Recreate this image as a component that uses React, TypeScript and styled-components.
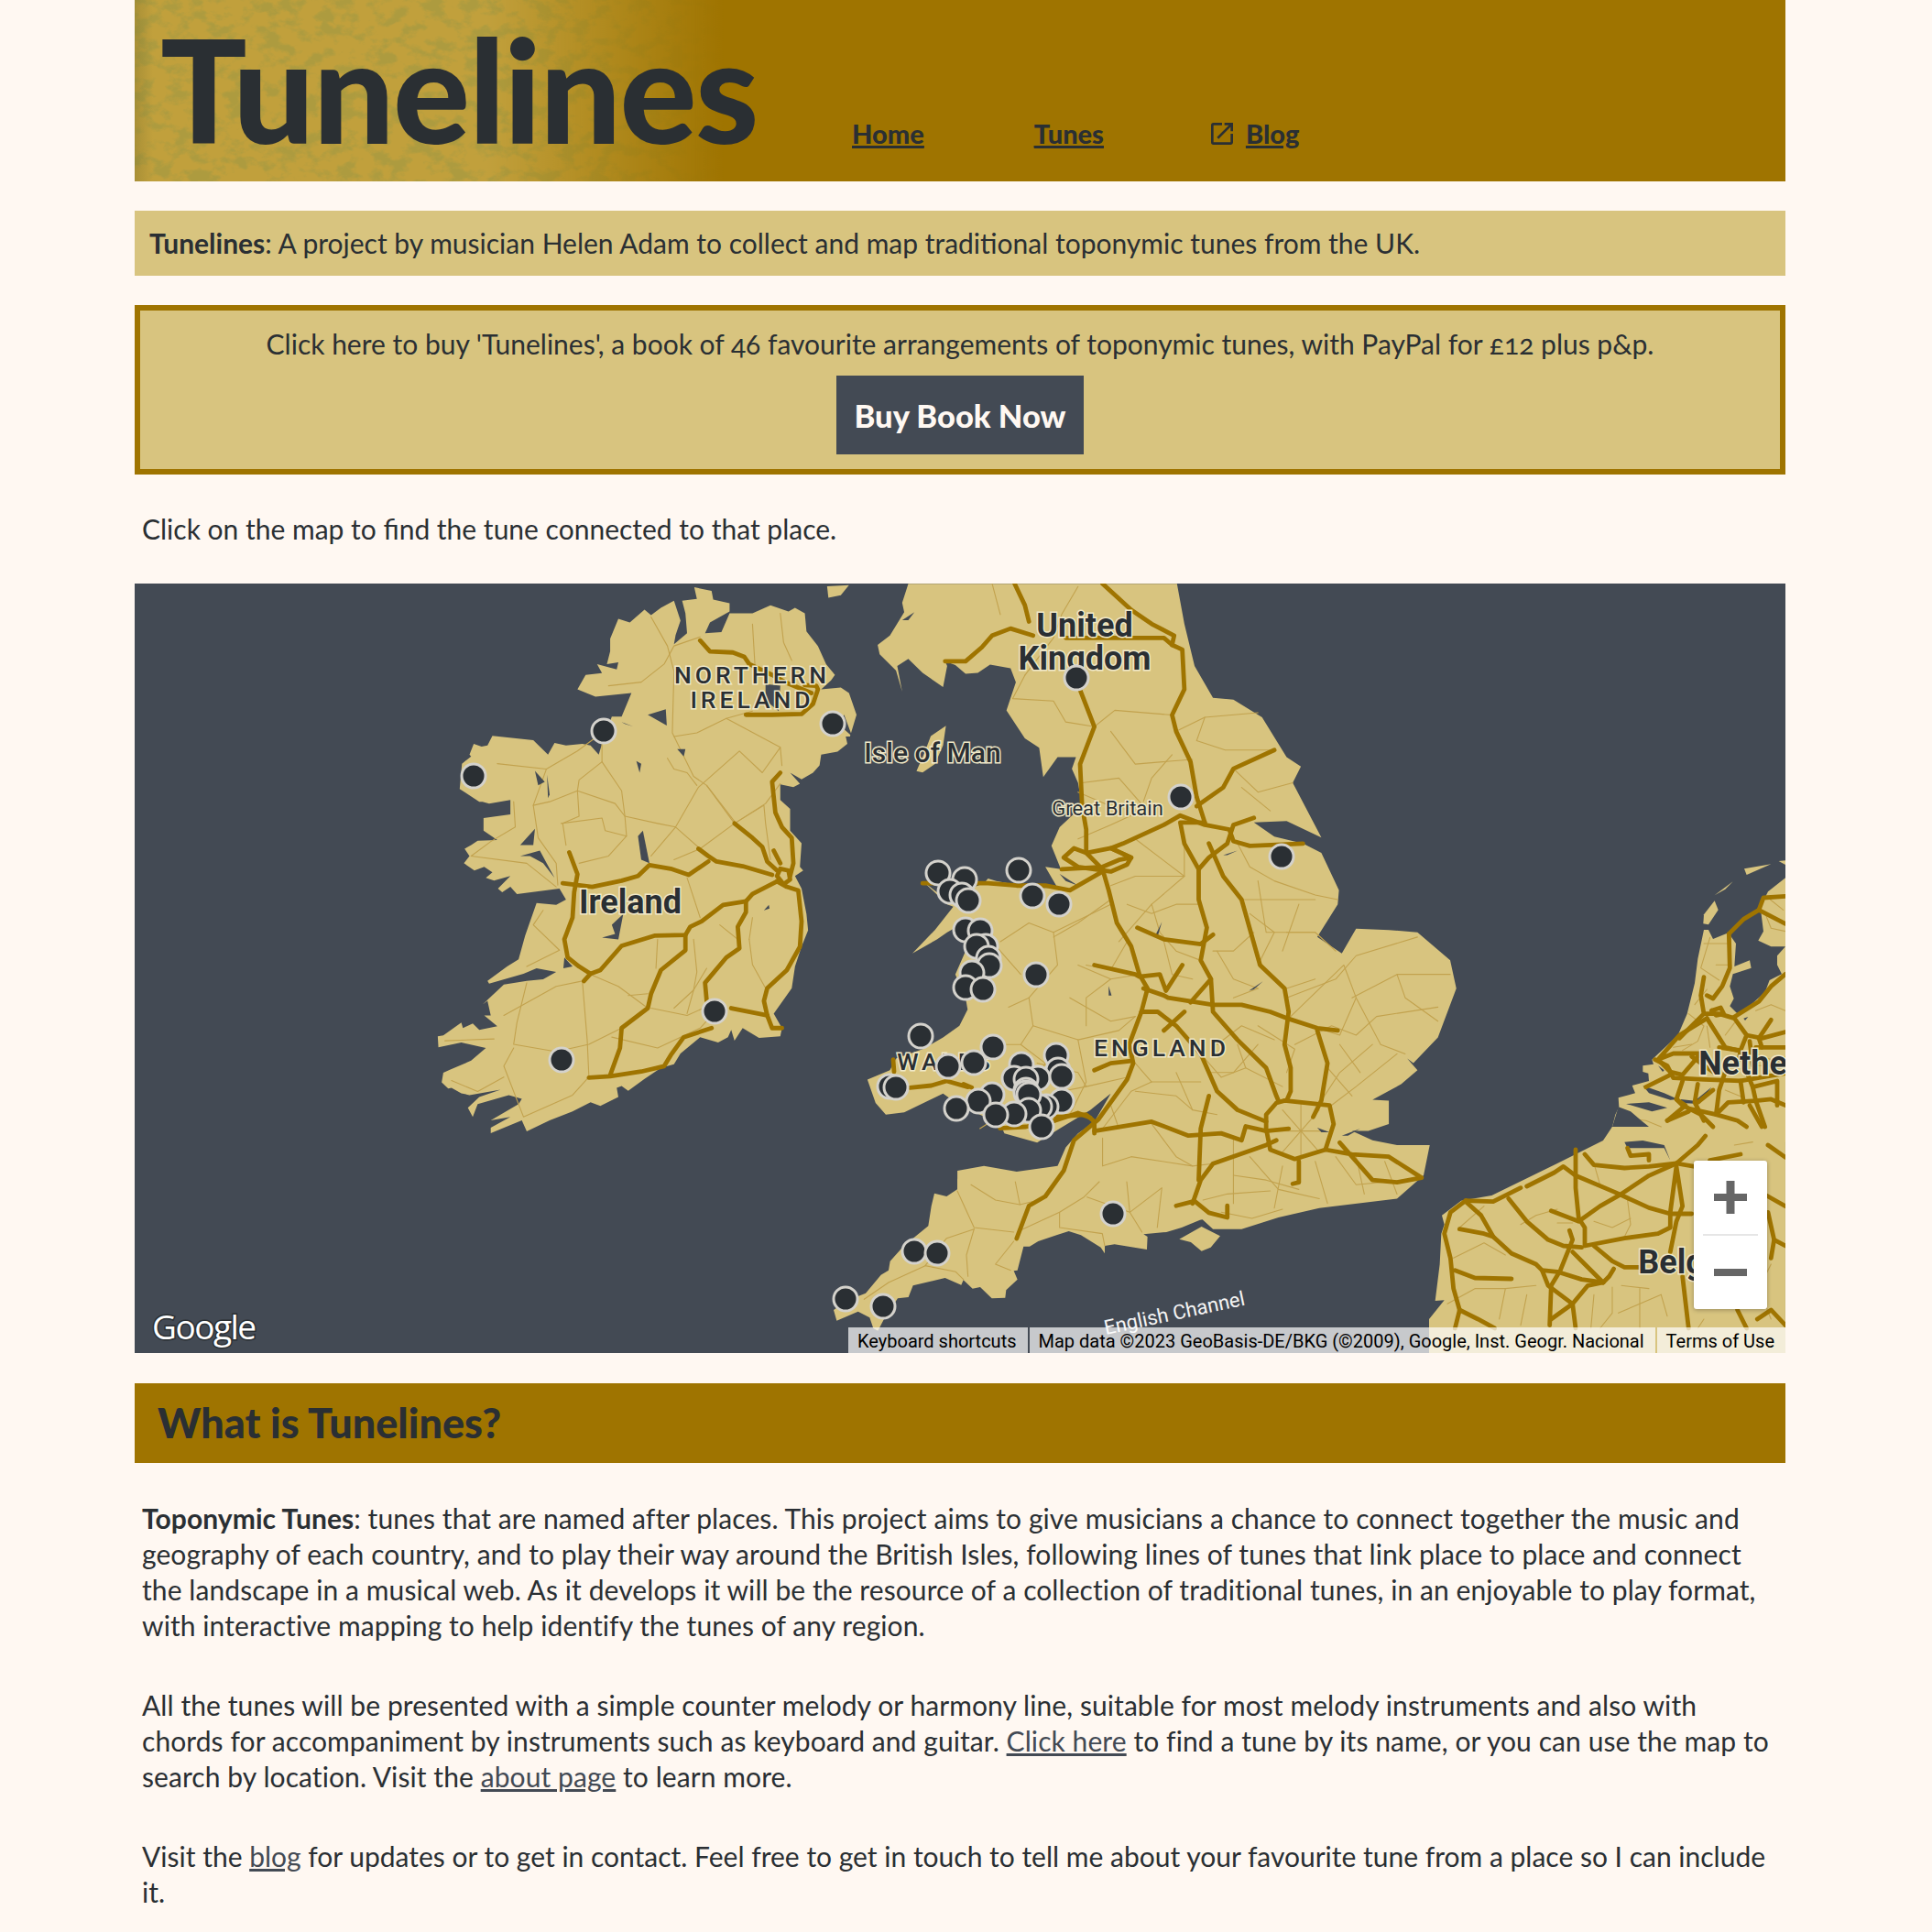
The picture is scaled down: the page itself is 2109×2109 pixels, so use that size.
import React from "react";
import styled, { createGlobalStyle } from "styled-components";
import { MdOpenInNew } from "react-icons/md";

const ink = "#2a2f33";
const slate = "#434a54";
const gold = "#9f7400";
const sand = "#d8c47f";

// map geometry, each region traced in its own crop coordinates
type Region = {
  transform: string;
  land?: string[];
  water?: string[];
  minor?: string[];
  major?: string[];
};

const regions: Region[] = [
  {
    // Ireland
    transform: "translate(450 630) scale(.35714 .3954)",
    land: [
      "862,28 915,38 920,62 970,72 970,95 910,125 895,155 945,152 970,100 1040,100 1095,78 1150,95 1170,85 1200,100 1205,150 1240,190 1265,240 1292,270 1280,285 1250,310 1310,305 1335,320 1358,380 1338,440 1325,440 1330,460 1300,482 1250,490 1245,520 1225,540 1190,558 1155,540 1185,570 1165,580 1125,572 1125,615 1155,640 1155,700 1190,735 1185,800 1195,810 1170,825 1190,860 1205,930 1210,975 1190,1020 1170,1075 1160,1135 1105,1205 1130,1245 1125,1268 1060,1272 1010,1245 985,1280 975,1250 965,1270 935,1285 880,1270 820,1315 800,1345 760,1355 710,1385 660,1418 640,1405 625,1410 630,1435 575,1460 545,1450 490,1475 420,1500 350,1530 335,1500 240,1535 240,1520 300,1490 240,1500 325,1455 335,1440 295,1430 200,1455 185,1490 170,1465 205,1435 270,1415 175,1430 150,1425 120,1410 110,1412 90,1395 95,1368 115,1360 180,1335 225,1300 150,1285 80,1298 78,1268 95,1265 150,1230 155,1245 185,1232 205,1250 260,1240 220,1210 240,1210 230,1170 215,1180 280,1125 350,1115 400,1110 440,1090 380,1080 340,1095 235,1122 230,1115 290,1075 325,1055 345,990 380,900 440,905 470,890 450,860 320,875 300,855 275,870 262,860 300,825 250,838 225,830 245,815 220,800 190,810 158,790 175,770 160,750 180,740 200,728 260,726 218,700 218,665 300,655 300,615 235,625 215,620 205,620 145,585 152,515 180,495 175,490 188,460 212,468 230,465 245,438 370,450 415,490 435,458 470,465 520,460 545,465 570,490 580,460 610,385 640,385 670,320 560,330 505,310 530,270 580,265 565,240 625,255 630,235 595,240 605,205 605,170 630,115 665,125 710,90 730,105 760,85 800,65 820,120 805,160 800,185 840,155 835,100 825,65 870,60",
      "1268,25 1335,22 1310,50 1272,57",
    ],
    water: [
      "1080,295 1125,300 1120,370 1080,340",
      "1310,395 1320,380 1345,440 1320,420",
      "375,535 405,565 385,575",
      "412,545 420,600 415,610",
      "690,715 705,700 725,790 700,780",
      "610,960 645,930 630,1000 580,995 620,985",
      "685,508 700,515 695,540",
      "810,475 835,475 830,495",
      "1075,920 1090,905 1092,915",
      "720,380 775,365 778,410",
      "640,400 675,412 650,405",
      "330,770 390,755 435,830 400,790 360,770",
      "330,740 375,695 370,740",
      "465,1050 490,1075 462,1080",
    ],
    minor: [
      "880,165 800,190 770,240 700,290 600,300",
      "730,110 780,190 800,260 795,430 860,550 900,575 990,680",
      "1040,130 1050,280",
      "1125,100 1135,180 1160,230",
      "580,460 580,510 640,590 650,660 655,715 600,770 510,790",
      "410,530 370,630 420,620 505,590 620,625 650,660 750,680 805,690 875,580 1000,480 1070,540 1125,470 1130,520",
      "260,515 410,530 505,480 580,430",
      "580,510 510,560 505,590 510,660 460,680 470,740",
      "310,620 315,690 240,730 180,770 350,790 440,855",
      "370,630 385,720 440,790 445,850",
      "455,680 580,665 590,700 655,715",
      "805,690 730,770",
      "805,690 880,750 985,680 1080,625 1125,570",
      "900,575 985,680 1075,630 1080,680 1095,780",
      "880,750 800,780",
      "960,390 1125,470",
      "800,440 870,430 960,390 1040,370",
      "780,500 800,530 840,540 870,575",
      "840,830 880,940",
      "750,1000 745,1080",
      "860,1000 870,1090 860,1140 800,1190",
      "940,960 995,1000",
      "1030,1000 1040,1070 1080,1135",
      "1040,940 1030,1000",
      "540,1095 630,1130 720,1190",
      "520,1115 535,1280 540,1380",
      "350,1120 320,1230 310,1290 440,1310 540,1290 640,1245",
      "280,1210 440,1130 520,1115",
      "310,1300 280,1350 340,1490 490,1430 540,1380",
      "610,1270 750,1300 880,1245 925,1200",
      "730,1190 840,1210 890,1190",
      "660,1155 720,1150",
      "900,1080 860,1140 840,1205",
      "400,920 370,960 450,1030 350,1075",
      "100,1280 250,1275",
      "120,1390 200,1420 280,1380",
    ],
    major: [
      "1125,540 1100,565 1110,650 1130,690 1160,720 1165,790 1155,825",
      "880,175 910,205 980,208 1015,220 1030,240 1100,270 1140,290 1220,320",
      "1020,380 1100,380 1190,378 1225,350 1240,310 1235,300 1200,298",
      "985,680 1040,720 1070,745 1085,785 1115,810",
      "1100,822 1010,798 930,785 905,770 875,750",
      "905,785 845,822 790,805 725,795 690,825 640,838 550,855 460,845",
      "480,760 505,820 495,870 490,940 465,1000 475,1050 510,1075 545,1095 525,1115",
      "1115,840 1040,875 1020,895 950,905 885,950 850,965 835,988 740,990 640,1018 575,1085 545,1095",
      "835,988 835,1030 760,1085 730,1150 720,1190 640,1245 635,1300 605,1375",
      "1020,895 1020,925 995,965 1000,1025 960,1050 895,1120 900,1170",
      "1115,840 1145,855 1180,865 1190,950 1185,1020 1145,1085 1085,1135 1075,1170 1085,1210 1100,1245 1130,1245",
      "975,1190 1085,1210",
      "915,1245 830,1270 790,1320 770,1350 700,1365 605,1378 540,1382",
      "1115,825 1125,805 1150,810 1155,835 1135,848 1115,825",
      "1105,755 1125,790",
    ],
  },
  {
    // Great Britain
    transform: "translate(900 630) scale(.44643 .5102)",
    land: [
      "205,14 190,55 195,75 160,125 130,145 135,165 175,200 190,245 178,190 205,175 240,205 290,235 300,190 295,180 320,188 345,207 375,205 405,187 455,195 468,225 445,285 490,345 525,365 535,428 570,385 615,385 605,410 620,440 630,490 575,535 555,575 578,625 540,620 570,665 520,665 480,660 420,650 400,645 390,655 345,670 305,695 240,650 300,700 315,705 270,755 215,805 275,775 300,760 340,740 345,800 320,850 345,900 350,925 330,960 290,985 240,1010 175,1030 160,1055 105,1075 125,1125 150,1150 195,1145 290,1105 330,1130 430,1170 440,1190 520,1210 575,1180 650,1140 700,1105 660,1165 620,1190 590,1220 570,1260 470,1272 390,1260 325,1270 325,1300 500,1400 900,1355 950,1395 1020,1395 1110,1370 1210,1350 1400,1330 1465,1280 1480,1215 1400,1215 1340,1205 1290,1185 1330,1185 1380,1170 1380,1120 1340,1118 1410,1085 1450,1055 1425,1030 1440,1040 1500,985 1545,880 1530,820 1450,760 1380,755 1300,752 1265,805 1205,770 1255,700 1258,670 1215,590 1170,570 1100,555 1050,525 1130,522 1215,557 1145,440 1165,405 1130,385 1070,300 1000,262 950,258 905,190 880,100 862,14",
      "225,415 245,375 260,340 297,318 290,360 270,400 240,418",
    ],
    water: [
      "190,92 220,75 205,92",
      "810,765 825,738 815,768",
      "1038,885 1072,865 1050,882",
      "695,875 702,895 695,895",
      "975,595 1010,585 985,595",
      "1205,1178 1235,1188 1215,1188",
      "1265,1195 1310,1180 1280,1195",
      "575,635 620,660 590,650",
    ],
    minor: [
      "410,14 430,80",
      "620,20 580,80 560,130 490,210",
      "490,210 460,260 560,265 590,310 660,320",
      "660,320 710,285 850,295",
      "860,330 930,300 1060,290",
      "930,300 910,350 980,370 1100,370",
      "1000,410 1060,460 1145,440",
      "700,330 760,400 900,390",
      "630,440 720,430 790,500",
      "1010,570 1040,620 1100,650 1200,680 1255,690",
      "1060,650 1080,760 1200,760 1250,800",
      "1020,690 1200,690",
      "700,700 560,760 570,830 500,900 510,960 620,990 640,1080 600,1150",
      "430,780 500,740 560,760",
      "560,770 620,740 700,690",
      "620,830 700,860 770,850",
      "640,960 640,900 700,860",
      "620,990 720,970 760,940",
      "480,1000 510,960",
      "380,1180 470,1130 580,1100 640,1090 740,1070",
      "1130,900 1250,860 1300,810 1450,770",
      "1140,940 1270,830 1300,900 1260,980 1205,965",
      "1290,900 1400,850 1530,850",
      "1400,850 1420,900 1500,950",
      "1300,900 1360,1000 1420,1020",
      "1240,1130 1300,1090 1400,1020",
      "1290,1110 1230,1050",
      "900,1000 970,1070 1030,1050 1120,1090",
      "760,1040 800,1080 920,1080",
      "680,1180 750,1100 800,1080",
      "680,1200 680,1260 750,1240 900,1260",
      "1000,1200 1000,1340",
      "1200,1250 1230,1340",
      "1250,1240 1300,1300 1420,1290",
      "1040,1240 1110,1310 1210,1330",
      "1105,1185 1225,1185",
      "1165,1125 1165,1245",
      "1120,1140 1210,1230",
      "1210,1140 1120,1230",
      "720,780 800,700 880,640 880,570",
      "1050,760 1000,800 950,800",
      "1060,960 1150,1010 1130,1060",
      "1010,1000 1030,1050",
      "1340,1000 1260,1060 1215,1120",
      "480,850 420,790",
      "700,660 760,640 850,640 880,640",
      "740,700 800,720 860,700 920,700",
      "740,780 700,840 640,830",
      "800,700 820,760 860,800 920,820",
      "830,780 850,850 900,860",
      "960,800 1000,860 1060,880",
      "1060,880 1000,900",
      "1040,720 1100,760 1060,830",
      "1130,880 1200,860",
      "1130,760 1200,760",
      "1160,700 1120,800",
      "1150,1000 1240,960 1300,980 1350,940 1500,920",
      "1260,1000 1310,1060",
      "1060,1000 1000,1060 940,1060",
      "960,1000 1020,960 1100,990",
      "860,1060 900,1140 960,1150",
      "760,1100 860,1110 900,1140",
      "700,1130 720,1180",
      "800,1170 860,1240 900,1260 950,1255",
      "1120,1260 1100,1350",
      "1000,1280 1080,1290 1160,1310",
      "1300,1240 1320,1320",
      "1370,1250 1400,1320",
      "600,900 700,950 760,940",
      "520,1040 620,1060 640,1090",
      "450,920 500,900",
      "420,1000 480,1000 540,1040 500,1100",
      "350,1050 420,1000",
      "620,560 700,530 800,490",
      "620,460 700,490",
      "850,380 800,430 780,480",
      "1020,450 1090,500",
      "760,560 820,600 880,640",
    ],
    major: [
      "465,14 490,60 500,95",
      "620,230 660,320 625,400 630,490 640,540 640,590 680,625 695,670 715,740 750,790 770,850 790,880 775,930",
      "295,180 345,180 385,150 410,125 455,110 510,125",
      "590,130 830,130 850,145",
      "680,14 750,70 800,100 855,125 850,145 875,155 880,240 850,295 860,330 895,395 910,470 930,525",
      "930,525 870,525 880,570 915,625 915,690 935,750 920,820 945,860 950,930 1010,990 1080,1050 1105,1110 1110,1120",
      "1130,1120 1140,1100 1140,1050 1125,1000 1135,930 1125,880 1065,830 1020,690 975,640 940,570",
      "1050,515 1000,530 985,570 940,600 915,625",
      "580,625 680,620 720,605 750,600 700,580 730,570 830,530 870,510 930,530 990,540 1000,565 1040,575 1170,570",
      "1100,370 1000,410 975,450 910,490",
      "585,600 610,580 640,590 700,580 750,600 740,615 700,630 620,620 585,600",
      "240,655 400,655 470,660 540,660 600,670 680,630",
      "660,830 760,850 770,855 820,850 835,885 875,830",
      "780,880 830,895 840,900 950,915 1020,915 1090,930 1135,945 1205,965 1255,970",
      "765,750 830,775 920,785 950,765",
      "895,910 945,860",
      "775,930 745,1000 755,1040 740,1075 670,1160 610,1205 585,1270 540,1325 500,1345 470,1415",
      "775,930 815,930 860,960 920,1020 960,1100 1010,1140 1080,1165",
      "660,1055 700,1040 750,1035",
      "1205,970 1230,1040 1215,1120 1195,1155",
      "1105,1125 1125,1120 1235,1130 1245,1170 1225,1225 1150,1245 1090,1225 1080,1180 1080,1150 1105,1125",
      "660,1185 800,1165 890,1195 970,1190 1020,1205 1030,1175 1080,1185 1135,1180",
      "1225,1225 1290,1235 1380,1240 1460,1285 1400,1295 1340,1290 1260,1210",
      "900,1340 920,1290 950,1255 1080,1215 1105,1205",
      "860,1345 905,1335 940,1360 985,1370 985,1345",
      "1160,1250 1160,1295 1145,1298",
      "565,1155 640,1150 660,1165 660,1190",
      "340,1085 360,1092",
      "940,1110 920,1180 915,1290",
      "830,970 880,930",
    ],
  },
  {
    // South West and the south coast
    transform: "translate(900 1290) scale(.3333)",
    land: [
      "360,38 400,48 435,25 435,-10 1300,-10 1300,110 1230,125 1170,150 1120,165 1045,172 1058,180 1056,222 950,205 918,210 918,235 905,215 840,175 800,162 760,175 700,195 672,212 652,212 632,290 620,292 632,320 595,355 592,380 548,382 510,345 485,350 455,322 448,338 395,315 290,340 275,378 240,382 200,440 175,488 160,480 148,445 110,425 40,455 30,420 60,400 110,375 135,365 185,305 210,290 215,260 260,210 340,145 350,80",
      "1162,188 1235,147 1296,178 1265,215 1235,227 1200,198",
    ],
    minor: [
      "435,30 490,150 620,165",
      "480,10 560,60 640,75",
      "625,0 640,75 680,65",
      "490,155 400,185 330,275 210,330 130,385",
      "330,275 430,295 455,320",
      "490,155 465,240 470,310",
      "620,195 560,270 610,290",
      "640,160 770,100 850,50 900,0",
      "770,100 770,150 910,170 918,210",
      "860,50 1000,100 1040,165",
      "1000,100 1105,20 1090,150",
      "990,0 1000,100",
      "1240,60 1320,40 1460,30",
      "1300,100 1400,120 1500,90",
    ],
  },
  {
    // South Wales trunk road
    transform: "translate(900 1100) scale(.3333)",
    major: [
      "225,170 228,210",
      "280,262 350,255 400,240 470,260",
      "575,395 660,390 755,370 830,345 870,360",
    ],
  },
  {
    // Netherlands
    transform: "translate(1760 930) scale(.3333)",
    land: [
      "100,700 135,695 130,680 215,600 245,530 270,430 280,350 300,255 315,255 330,285 380,265 405,300 400,375 450,355 455,380 395,400 385,440 398,480 385,505 415,535 500,460 515,420 555,400 540,370 540,340 567,310 520,310 478,290 495,260 485,180 510,130 567,85 580,85 580,950 -20,950 0,900 10,860 22,835 20,805 75,790 65,765 120,750 118,725 100,720",
      "432,55 520,40 440,75",
      "335,142 395,97 370,122",
      "300,205 335,160 347,190 315,238 298,235",
      "545,30 567,28 567,42",
    ],
    water: [
      "100,765 170,790 215,810 190,812 120,790",
      "45,825 120,820 180,838 130,850",
      "20,835 60,850 95,880 120,900 0,900",
      "225,810 270,815 325,770 285,825 225,822",
      "430,545 445,540 435,552",
      "150,700 170,715 165,720",
    ],
    minor: [
      "300,300 340,300 380,300",
      "320,280 290,380 350,420",
      "340,370 390,370",
      "270,500 310,450",
      "250,530 300,570 280,620 230,650",
      "310,570 320,640",
      "400,560 370,600",
      "500,200 520,250 567,260",
      "510,150 560,190",
      "470,520 520,500 567,520",
      "430,650 520,680 567,670",
      "370,780 420,800",
      "200,640 260,630",
      "470,700 560,700",
      "30,870 110,880 160,900",
    ],
    major: [
      "382,268 430,220 480,190 495,150 567,145",
      "480,190 567,235",
      "382,268 385,380 360,440 330,480 310,470",
      "300,410 290,470 300,530 220,610",
      "300,530 350,530 400,545 440,600 420,650 415,680",
      "400,540 480,490 520,440 567,400",
      "310,545 370,640 410,650",
      "440,600 490,610 567,590",
      "310,545 220,600 150,680 190,720 230,730 290,660 200,660 150,680",
      "140,680 180,700 200,740 300,745 420,750 567,725",
      "110,770 190,730",
      "370,720 350,780 340,860 380,820 470,815 520,810 567,830",
      "230,750 210,810 240,830 180,880",
      "210,810 230,830 290,860 330,900",
      "280,760 270,820 300,880",
      "460,770 470,815 500,900",
      "440,720 460,770 540,750 540,830",
      "520,550 480,610 490,640",
      "250,840 340,860 410,880 440,900",
      "450,830 490,900",
      "325,520 355,510 365,530 340,535 325,520",
      "180,880 250,850",
      "470,640 567,640",
      "350,640 420,650",
      "260,670 330,720",
      "420,750 430,820",
      "520,700 567,680",
      "330,780 280,820",
      "450,620 460,700",
    ],
  },
  {
    // Belgium and northern France
    transform: "translate(1560 1240) scale(.3333)",
    land: [
      "0,600 50,538 20,540 35,420 40,320 50,290 42,260 105,212 205,195 400,100 570,15 600,-30 1167,-30 1167,720 0,720",
    ],
    water: ["640,20 700,15 770,30 790,80 770,40 700,40 650,40"],
    minor: [
      "100,300 180,230",
      "80,400 180,350 250,390",
      "60,550 150,500 250,500 350,490",
      "300,290 350,260 420,240",
      "540,280 600,300 660,270",
      "540,90 560,160",
      "650,210 660,290 640,330",
      "600,495 600,580 560,630",
      "620,580 760,520",
      "690,500 690,630",
      "760,520 780,590",
      "880,320 860,440",
      "1120,420 1080,500 1120,600",
      "1000,30 1060,20",
      "250,500 230,600",
      "320,520 300,620",
      "540,520 530,630",
      "900,600 880,630",
      "420,285 470,285",
      "630,490 720,500",
    ],
    major: [
      "120,212 70,250 50,320 70,400 80,500 100,570 85,630",
      "100,570 160,600 215,630",
      "120,212 210,215 300,170",
      "320,165 410,120 440,100 480,130 610,185 720,235 790,255 860,255",
      "120,215 170,260 210,330 270,385 350,420 370,440 420,445 500,470 570,480 590,460 605,435",
      "260,205 320,280 390,340 440,360 500,365",
      "480,45 480,170 490,270 510,300 510,360 640,335 750,320 790,300 790,250 810,100 830,230 810,280 790,380",
      "400,245 490,280 560,230 630,190 720,130 810,90 870,100",
      "460,310 470,340 430,440 400,490 395,620",
      "370,440 390,490 470,550 520,490 570,480",
      "400,600 470,550 480,630",
      "470,380 510,420 570,480",
      "540,360 600,410 640,430 700,430",
      "100,305 180,320 210,330",
      "85,440 150,465 270,468",
      "510,60 540,95 640,105 720,100 810,90",
      "810,90 880,30 905,0",
      "1105,195 1167,230",
      "1110,250 1130,340 1167,360",
      "1130,340 1120,400",
      "1010,570 1040,630",
      "830,460 850,630",
      "1075,600 1120,570 1167,620",
      "1110,30 1167,70",
      "1020,60 920,80",
      "650,40 660,65 720,60 720,80",
    ],
  },
];

const markers = [
  [659, 798], [517, 847], [909, 790], [780, 1104], [613, 1157], [1175, 740], [1289, 870], [1399, 935],
  [1112, 950], [1024, 953], [1053, 960], [1037, 973], [1050, 977], [1057, 983], [1127, 978], [1156, 987],
  [1054, 1015], [1070, 1016], [1076, 1033], [1066, 1033], [1079, 1046], [1080, 1054], [1061, 1062], [1054, 1078],
  [1073, 1080], [1131, 1064], [1005, 1131], [971, 1186], [978, 1187], [1083, 1195], [1153, 1152], [1115, 1162],
  [1155, 1168], [1107, 1177], [1133, 1177], [1159, 1175], [1120, 1178], [1084, 1143], [1063, 1160], [1035, 1164],
  [1159, 1202], [1142, 1208], [1135, 1208], [1120, 1190], [1120, 1193], [1123, 1195], [1123, 1212], [1107, 1216],
  [1068, 1202], [1044, 1210], [1087, 1217], [1137, 1230], [1215, 1325], [998, 1366], [1023, 1368], [923, 1418], [964, 1426],
];

const GlobalStyle = createGlobalStyle`
  html, body {
    margin: 0;
    background: #fff8f2;
    color: ${ink};
    font-family: Lato, "Open Sans", sans-serif;
    font-size: 30px;
    line-height: 39px;
    font-variant-numeric: oldstyle-nums;
  }
`;

const Page = styled.div`
  width: 1802px;
  margin-left: 147px;
`;

const Header = styled.header`
  position: relative;
  display: flex;
  align-items: baseline;
  height: 198px;
  padding-left: 28px;
  background: ${gold};
  overflow: hidden;
`;

const HeaderTexture = styled.svg`
  position: absolute;
  left: 0;
  top: 0;
`;

const Title = styled.h1`
  position: relative;
  margin: 0;
  font-size: 157px;
  line-height: 192px;
  font-weight: 900;
  letter-spacing: -1.6px;
`;

const Nav = styled.nav`
  position: relative;
  display: flex;
  align-items: baseline;
  gap: 120px;
  margin-left: 103px;
`;

const NavLink = styled.a`
  display: inline-flex;
  align-items: baseline;
  gap: 14px;
  font-size: 29px;
  font-weight: 900;
  color: ${ink};
  span {
    text-decoration: underline;
    text-decoration-thickness: 3px;
  }
  svg {
    align-self: center;
    margin-left: -7px;
    margin-right: -4px;
  }
`;

const Intro = styled.p`
  margin: 32px 0;
  padding: 16px;
  background: ${sand};
`;

const BuyBox = styled.section`
  display: flex;
  flex-direction: column;
  align-items: center;
  gap: 15px;
  padding: 17px 0 16px;
  border: 6px solid ${gold};
  background: ${sand};
`;

const BuyText = styled.div`
  text-align: center;
`;

const BuyButton = styled.button`
  width: 270px;
  height: 86px;
  padding: 0;
  border: 0;
  background: ${slate};
  color: #fff8f2;
  font-family: inherit;
  font-size: 34.5px;
  font-weight: 900;
`;

const Para = styled.p<{ $tracking?: number }>`
  margin: 0 8px;
  white-space: nowrap;
  letter-spacing: ${(p) => p.$tracking ?? 0.08}px;
`;

const MapPrompt = styled.p`
  margin: 40px 8px;
`;

const MapFrame = styled.div`
  position: relative;
  height: 840px;
  background: ${slate};
  overflow: hidden;
`;

const MapSvg = styled.svg`
  display: block;
`;

const Land = styled.polygon`
  fill: ${sand};
`;

const Lake = styled.polygon`
  fill: ${slate};
`;

const Road = styled.polyline<{ $major?: boolean }>`
  fill: none;
  vector-effect: non-scaling-stroke;
  stroke-linejoin: round;
  stroke-linecap: round;
  stroke: ${(p) => (p.$major ? gold : "#c2a24e")};
  stroke-width: ${(p) => (p.$major ? 4.8 : 1.1)}px;
`;

const Marker = styled.circle`
  fill: ${ink};
  stroke: #d4d2cc;
  stroke-width: 3;
`;

const Label = styled.text<{ $size: number; $weight?: number; $spacing?: number }>`
  font-family: Roboto, sans-serif;
  font-size: ${(p) => p.$size}px;
  font-weight: ${(p) => p.$weight ?? 700};
  letter-spacing: ${(p) => p.$spacing ?? 0}em;
  fill: ${ink};
  stroke: #f0e8c8;
  stroke-width: 3px;
  paint-order: stroke;
  text-anchor: middle;
  dominant-baseline: middle;
`;

const ChannelLabel = styled.text`
  font-family: Roboto, sans-serif;
  font-size: 22px;
  fill: #f4f4f4;
`;

const GoogleMark = styled.div`
  position: absolute;
  left: 19px;
  bottom: 7px;
  font-family: "Open Sans", sans-serif;
  font-size: 37px;
  font-weight: 500;
  line-height: 44px;
  letter-spacing: -1.5px;
  color: #fff;
  -webkit-text-stroke: 3px #2a2f33;
  paint-order: stroke fill;
`;

const Attribution = styled.div`
  position: absolute;
  right: 0;
  bottom: 0;
  display: flex;
  gap: 2px;
  height: 28px;
  font-family: Roboto, sans-serif;
  font-size: 20px;
  line-height: 30px;
  font-variant-numeric: lining-nums;
  color: #000;
`;

const AttrItem = styled.span`
  padding: 0 12px 0 10px;
  background: rgba(255, 255, 255, 0.7);
`;

const ZoomBox = styled.div`
  position: absolute;
  left: 1702px;
  top: 630px;
  display: flex;
  flex-direction: column;
  width: 80px;
  height: 162px;
  border-radius: 3px;
  background: #fff;
  box-shadow: 0 1px 5px rgba(0, 0, 0, 0.3);
`;

const ZoomButton = styled.div`
  flex: 1;
  display: flex;
  align-items: center;
  justify-content: center;
`;

const ZoomDivider = styled.div`
  height: 2px;
  margin: 0 10px;
  background: #e6e6e6;
`;

const SectionHeading = styled.h2`
  margin: 33px 0 0;
  padding: 0 25px;
  height: 87px;
  background: ${gold};
  font-size: 45px;
  line-height: 87px;
  font-weight: 900;
`;

const Body = styled.div`
  display: flex;
  flex-direction: column;
  gap: 48px;
  margin-top: 41px;
`;

const InlineLink = styled.a`
  color: ${slate};
  text-decoration: underline;
`;

function MapArt() {
  return (
    <MapSvg width="1802" height="840" viewBox="147 637 1802 840">
      {regions.map((r, i) => (
        <g key={i} transform={r.transform}>
          {r.land?.map((pts, j) => <Land key={j} points={pts} />)}
        </g>
      ))}
      {regions.map((r, i) => (
        <g key={i} transform={r.transform}>
          {r.minor?.map((pts, j) => <Road key={j} points={pts} />)}
          {r.water?.map((pts, j) => <Lake key={j} points={pts} />)}
        </g>
      ))}
      {regions.map((r, i) => (
        <g key={i} transform={r.transform}>
          {r.major?.map((pts, j) => <Road key={j} points={pts} $major />)}
        </g>
      ))}
      <Label x="1184" y="685" $size={36}>United</Label>
      <Label x="1184" y="721" $size={36}>Kingdom</Label>
      <Label x="821" y="739" $size={26.5} $weight={500} $spacing={0.15}>NORTHERN</Label>
      <Label x="821" y="766" $size={26.5} $weight={500} $spacing={0.15}>IRELAND</Label>
      <Label x="688" y="987" $size={36}>Ireland</Label>
      <Label x="1018" y="824" $size={30} $weight={500}>Isle of Man</Label>
      <Label x="1209" y="884" $size={22} $weight={400}>Great Britain</Label>
      <Label x="1268" y="1146" $size={26.5} $weight={500} $spacing={0.15}>ENGLAND</Label>
      <Label x="1032" y="1161" $size={26.5} $weight={500} $spacing={0.15}>WALES</Label>
      <Label x="1953" y="1163" $size={36}>Netherlands</Label>
      <Label x="1855" y="1380" $size={36}>Belgium</Label>
      <ChannelLabel transform="translate(1207 1457) rotate(-12)">English Channel</ChannelLabel>
      {markers.map(([x, y], i) => (
        <Marker key={i} cx={x} cy={y} r="13" />
      ))}
    </MapSvg>
  );
}

export default function App() {
  return (
    <Page>
      <GlobalStyle />
      <Header>
        <HeaderTexture width="700" height="198">
          <defs>
            <linearGradient id="fade" x1="0" x2="1" y1="0" y2="0">
              <stop offset="0" stopColor="#fff" />
              <stop offset="0.55" stopColor="#fff" />
              <stop offset="0.92" stopColor="#000" />
            </linearGradient>
            <mask id="fadeMask">
              <rect width="700" height="198" fill="url(#fade)" />
            </mask>
            <filter id="grain" x="0" y="0" width="100%" height="100%">
              <feTurbulence type="fractalNoise" baseFrequency="0.05 0.07" numOctaves="5" seed="7" />
              <feColorMatrix values="0 0 0 0 0.42  0 0 0 0 0.33  0 0 0 0 0.05  5 0 0 0 -2.3" />
            </filter>
            <linearGradient id="edge" x1="0" x2="1" y1="0" y2="0">
              <stop offset="0" stopColor="#6f6a2a" stopOpacity="0.3" />
              <stop offset="1" stopColor="#6f6a2a" stopOpacity="0" />
            </linearGradient>
          </defs>
          <g mask="url(#fadeMask)">
            <rect width="700" height="198" fill="#c1a03c" />
            <rect width="700" height="198" filter="url(#grain)" />
            <rect width="20" height="198" fill="url(#edge)" />
          </g>
        </HeaderTexture>
        <Title>Tunelines</Title>
        <Nav>
          <NavLink href="#"><span>Home</span></NavLink>
          <NavLink href="#"><span>Tunes</span></NavLink>
          <NavLink href="#"><MdOpenInNew size={32} /><span>Blog</span></NavLink>
        </Nav>
      </Header>
      <Intro><strong>Tunelines</strong>: A project by musician Helen Adam to collect and map traditional toponymic tunes from the UK.</Intro>
      <BuyBox>
        <BuyText>Click here to buy 'Tunelines', a book of 46 favourite arrangements of toponymic tunes, with PayPal for £12 plus p&amp;p.</BuyText>
        <BuyButton>Buy Book Now</BuyButton>
      </BuyBox>
      <MapPrompt>Click on the map to find the tune connected to that place.</MapPrompt>
      <MapFrame>
        <MapArt />
        <GoogleMark>Google</GoogleMark>
        <ZoomBox>
          <ZoomButton>
            <svg width="36" height="36" viewBox="0 0 36 36"><path d="M13.5 0h9v14h13.5v8H22.5v14h-9V22H0v-8h13.5z" fill="#666" /></svg>
          </ZoomButton>
          <ZoomDivider />
          <ZoomButton>
            <svg width="36" height="8" viewBox="0 0 36 8"><rect width="36" height="8" fill="#666" /></svg>
          </ZoomButton>
        </ZoomBox>
        <Attribution>
          <AttrItem>Keyboard shortcuts</AttrItem>
          <AttrItem>Map data ©2023 GeoBasis-DE/BKG (©2009), Google, Inst. Geogr. Nacional</AttrItem>
          <AttrItem>Terms of Use</AttrItem>
        </Attribution>
      </MapFrame>
      <SectionHeading>What is Tunelines?</SectionHeading>
      <Body>
        <Para>
          <strong>Toponymic Tunes</strong>: tunes that are named after places. This project aims to give musicians a chance to connect together the music and<br />
          geography of each country, and to play their way around the British Isles, following lines of tunes that link place to place and connect<br />
          the landscape in a musical web. As it develops it will be the resource of a collection of traditional tunes, in an enjoyable to play format,<br />
          with interactive mapping to help identify the tunes of any region.
        </Para>
        <Para>
          All the tunes will be presented with a simple counter melody or harmony line, suitable for most melody instruments and also with<br />
          chords for accompaniment by instruments such as keyboard and guitar. <InlineLink href="#">Click here</InlineLink> to find a tune by its name, or you can use the map to<br />
          search by location. Visit the <InlineLink href="#">about page</InlineLink> to learn more.
        </Para>
        <Para $tracking={0}>
          Visit the <InlineLink href="#">blog</InlineLink> for updates or to get in contact. Feel free to get in touch to tell me about your favourite tune from a place so I can include<br />
          it.
        </Para>
      </Body>
    </Page>
  );
}
